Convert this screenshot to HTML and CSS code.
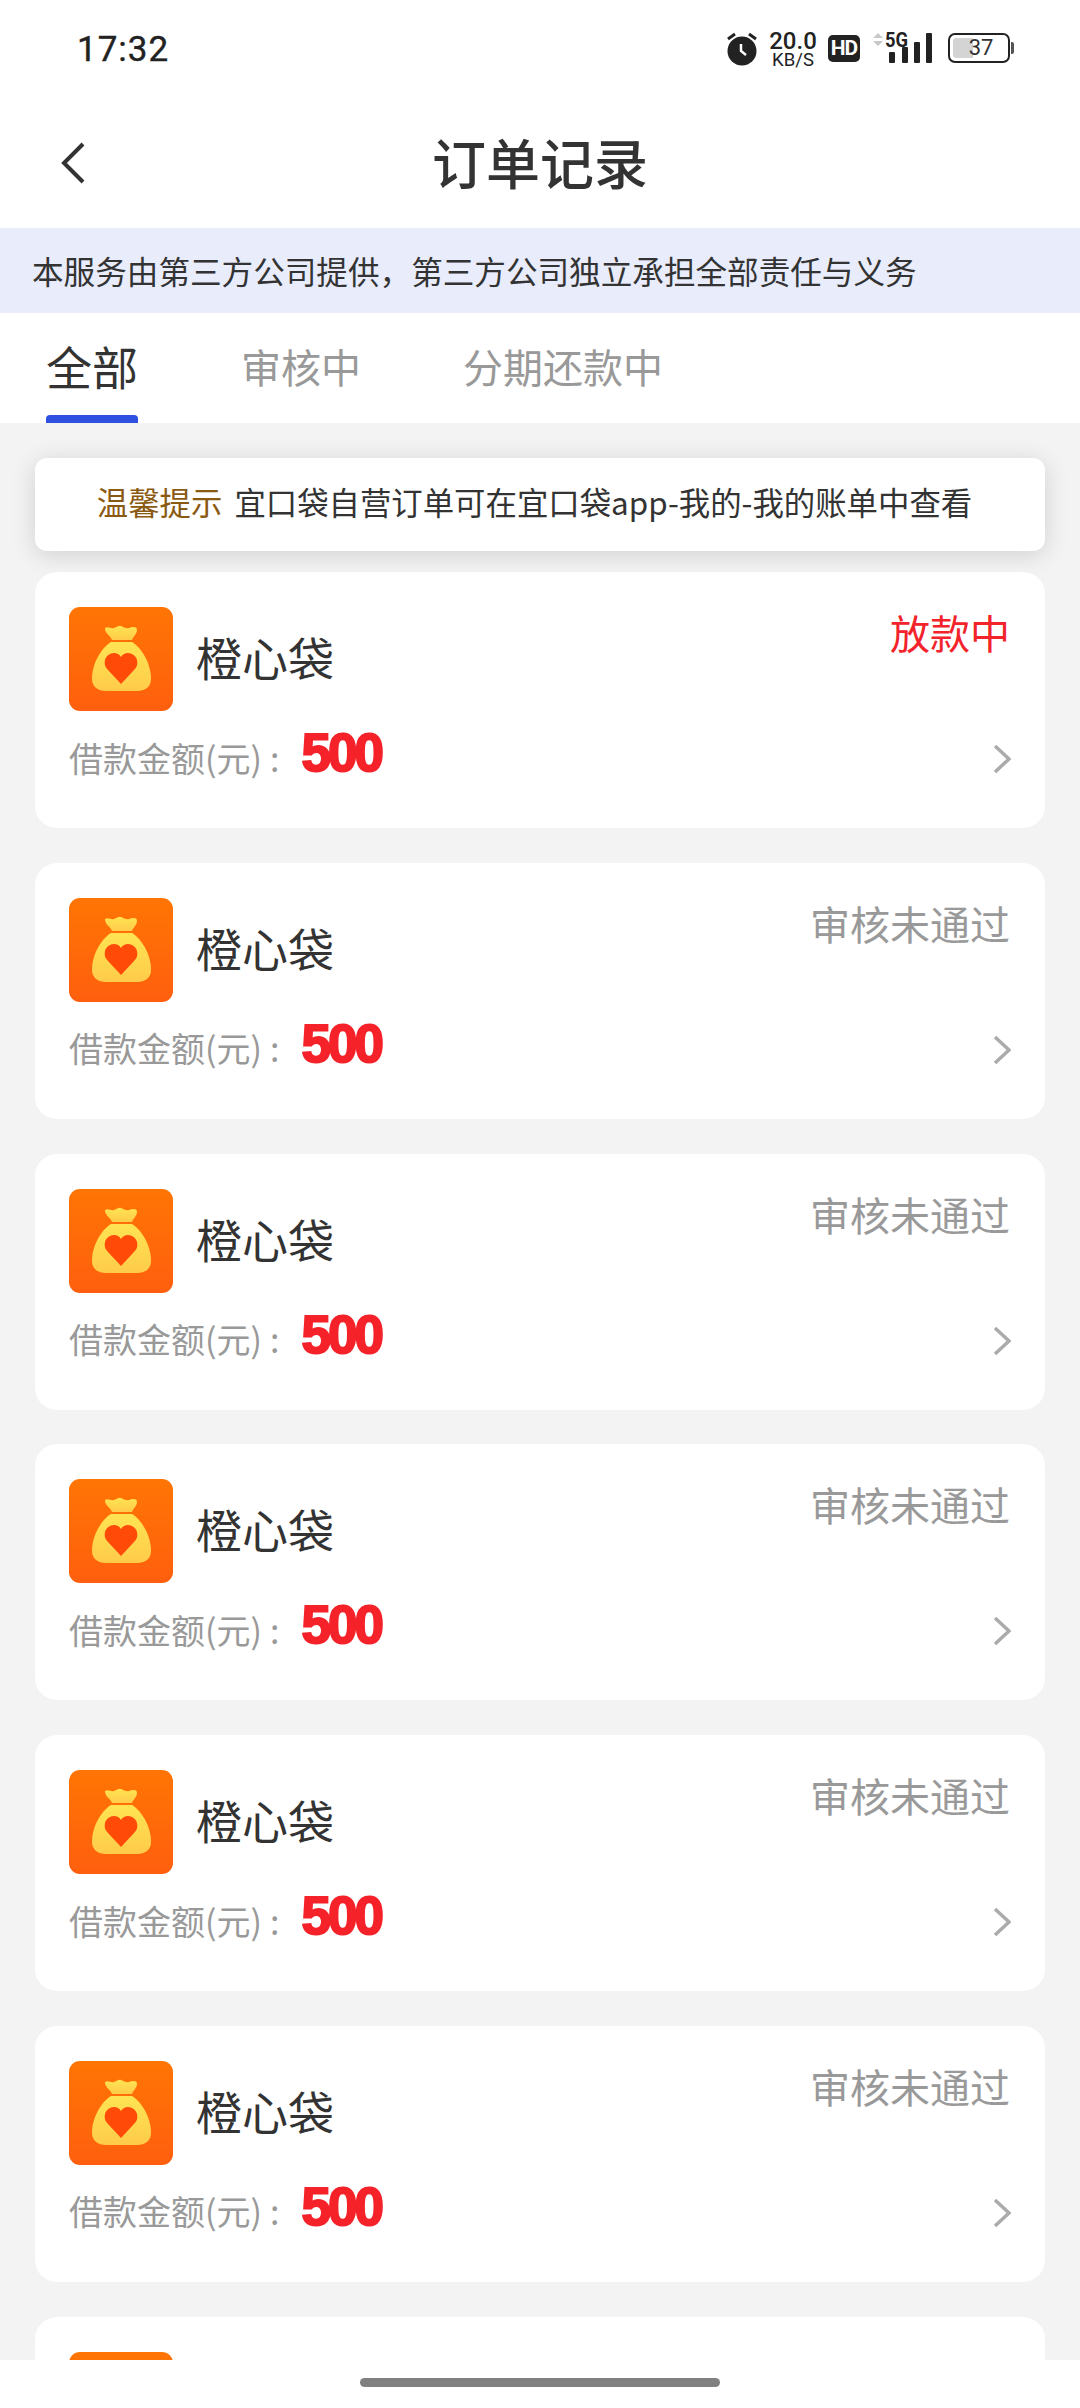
FILE: index.html
```html
<!DOCTYPE html>
<html lang="zh-CN">
<head>
  <title>订单记录</title>
  <meta charset="utf-8">
  <meta name="viewport" content="width=device-width, initial-scale=1">
  <link rel="stylesheet" href="styles.css">
</head>
<body>
  <svg class="defs" width="0" height="0" aria-hidden="true">
    <defs>
      <linearGradient id="iconBg" x1="0" y1="0" x2="0" y2="1">
        <stop offset="0" stop-color="#FF7504"/>
        <stop offset="1" stop-color="#FF5F0E"/>
      </linearGradient>
      <linearGradient id="bagFill" x1="0" y1="0" x2="0" y2="1">
        <stop offset="0" stop-color="#FFE452"/>
        <stop offset="1" stop-color="#FFCB4A"/>
      </linearGradient>
      <symbol id="bag" viewBox="0 0 104 104">
        <rect width="104" height="104" rx="11" fill="url(#iconBg)"/>
        <path d="M36 21c3-2 6 1 9 0 3-1 5-3 7-2 3 1 5 3 8 2 3-1 8-2 8 2 0 4-3 5-5 10H43c-2-5-7-6-7-12z" fill="url(#bagFill)"/>
        <path d="M42 35h21c6 3 19 18 19 37 0 8-6 12-14 12H37c-8 0-14-4-14-12 0-19 13-34 19-37z" fill="url(#bagFill)"/>
        <path d="M52 77 39 63c-3-3-4-6-3-10 1-4 5-7 9-7 3 0 5 1 7 4 2-3 4-4 7-4 4 0 8 3 9 7 1 4 0 7-3 10z" fill="#FF4A08"/>
      </symbol>
      <symbol id="chevron" viewBox="0 0 18 30">
        <path d="M2 2l14 13L2 28" fill="none" stroke="#ABABAB" stroke-width="3.5"/>
      </symbol>
    </defs>
  </svg>

  <div class="page">
    <header class="status-bar">
      <span class="time">17:32</span>
      <div class="status-icons">
        <svg class="alarm" width="30" height="35" viewBox="0 0 30 35">
          <path d="M1 8l7-5M29 8l-7-5" stroke="#222" stroke-width="3" fill="none"/>
          <circle cx="15" cy="20" r="14.5" fill="#222"/>
          <path d="M14 13v7l5 4" stroke="#fff" stroke-width="2.5" fill="none"/>
        </svg>
        <div class="speed"><span class="speed-num">20.0</span><span class="speed-unit">KB/S</span></div>
        <span class="hd">HD</span>
        <svg class="signal" width="62" height="32" viewBox="0 0 62 32">
          <path d="M1 6l5-5 5 5zM1 9l5 5 5-5z" fill="#C8C8C8"/>
          <rect x="17" y="20" width="6" height="11" rx="1" fill="#222"/>
          <rect x="30" y="15" width="6" height="16" rx="1" fill="#222"/>
          <rect x="42" y="10" width="6" height="21" rx="1" fill="#222"/>
          <rect x="54" y="1" width="6" height="30" rx="1" fill="#222"/>
          <text x="13" y="15" class="signal-text" textLength="23" lengthAdjust="spacingAndGlyphs">5G</text>
        </svg>
        <div class="battery"><span class="battery-fill"></span><span class="battery-num">37</span></div>
      </div>
    </header>

    <nav class="nav">
      <svg class="back" width="26" height="42" viewBox="0 0 26 42">
        <path d="M23 2 4 21l19 19" fill="none" stroke="#333" stroke-width="4"/>
      </svg>
      <h1 class="nav-title">订单记录</h1>
    </nav>

    <div class="service-note">本服务由第三方公司提供，第三方公司独立承担全部责任与义务</div>

    <div class="tabs">
      <a class="tab tab-active">全部</a>
      <a class="tab">审核中</a>
      <a class="tab">分期还款中</a>
    </div>

    <main class="content">
      <div class="tip"><span class="tip-label">温馨提示</span><span>宜口袋自营订单可在宜口袋app-我的-我的账单中查看</span></div>

      <section class="orders">
        <article class="order">
          <div class="order-top">
            <svg class="order-icon"><use href="#bag"/></svg>
            <span class="order-name">橙心袋</span>
            <span class="order-status status-red">放款中</span>
          </div>
          <div class="order-bottom">
            <span class="order-label">借款金额(元)<span class="order-colon">:</span></span>
            <span class="order-amount">500</span>
            <svg class="order-arrow"><use href="#chevron"/></svg>
          </div>
        </article>
        <article class="order">
          <div class="order-top">
            <svg class="order-icon"><use href="#bag"/></svg>
            <span class="order-name">橙心袋</span>
            <span class="order-status">审核未通过</span>
          </div>
          <div class="order-bottom">
            <span class="order-label">借款金额(元)<span class="order-colon">:</span></span>
            <span class="order-amount">500</span>
            <svg class="order-arrow"><use href="#chevron"/></svg>
          </div>
        </article>
        <article class="order">
          <div class="order-top">
            <svg class="order-icon"><use href="#bag"/></svg>
            <span class="order-name">橙心袋</span>
            <span class="order-status">审核未通过</span>
          </div>
          <div class="order-bottom">
            <span class="order-label">借款金额(元)<span class="order-colon">:</span></span>
            <span class="order-amount">500</span>
            <svg class="order-arrow"><use href="#chevron"/></svg>
          </div>
        </article>
        <article class="order">
          <div class="order-top">
            <svg class="order-icon"><use href="#bag"/></svg>
            <span class="order-name">橙心袋</span>
            <span class="order-status">审核未通过</span>
          </div>
          <div class="order-bottom">
            <span class="order-label">借款金额(元)<span class="order-colon">:</span></span>
            <span class="order-amount">500</span>
            <svg class="order-arrow"><use href="#chevron"/></svg>
          </div>
        </article>
        <article class="order">
          <div class="order-top">
            <svg class="order-icon"><use href="#bag"/></svg>
            <span class="order-name">橙心袋</span>
            <span class="order-status">审核未通过</span>
          </div>
          <div class="order-bottom">
            <span class="order-label">借款金额(元)<span class="order-colon">:</span></span>
            <span class="order-amount">500</span>
            <svg class="order-arrow"><use href="#chevron"/></svg>
          </div>
        </article>
        <article class="order">
          <div class="order-top">
            <svg class="order-icon"><use href="#bag"/></svg>
            <span class="order-name">橙心袋</span>
            <span class="order-status">审核未通过</span>
          </div>
          <div class="order-bottom">
            <span class="order-label">借款金额(元)<span class="order-colon">:</span></span>
            <span class="order-amount">500</span>
            <svg class="order-arrow"><use href="#chevron"/></svg>
          </div>
        </article>
        <article class="order">
          <div class="order-top">
            <svg class="order-icon"><use href="#bag"/></svg>
          </div>
        </article>
      </section>
    </main>

    <div class="home-bar"><span class="home-pill"></span></div>
  </div>
</body>
</html>
```

FILE: styles.css
```css
*, *::before, *::after {
  margin: 0;
  padding: 0;
  box-sizing: border-box;
}

html, body {
  width: 1080px;
  height: 2408px;
  overflow: hidden;
}

body {
  background-color: #F3F3F3;
  color: #333333;
  font-family: "Noto Sans CJK SC", "Noto Sans", sans-serif;
}

.defs {
  display: block;
  height: 0;
}

.page {
  position: relative;
  width: 1080px;
  height: 2408px;
  overflow: hidden;
  display: flex;
  flex-direction: column;
}

/* status bar */
.status-bar {
  height: 98px;
  flex: none;
  display: flex;
  justify-content: space-between;
  align-items: flex-start;
  padding: 26px 70px 0 77px;
  background-color: #FFFFFF;
  color: #222222;
}

.time {
  margin-top: 2px;
  font-family: "Roboto", sans-serif;
  font-size: 35px;
  font-weight: 400;
  line-height: 44px;
  letter-spacing: 1px;
  -webkit-text-stroke: 0.4px #222222;
}

.status-icons {
  display: flex;
  align-items: center;
  height: 44px;
}

.alarm {
  margin-right: 10px;
}

.speed {
  display: flex;
  flex-direction: column;
  align-items: center;
  width: 52px;
  margin-top: 3px;
  font-family: "Roboto", sans-serif;
  color: #222222;
}

.speed-num {
  font-size: 24px;
  font-weight: 500;
  line-height: 20px;
}

.speed-unit {
  font-size: 18.5px;
  line-height: 18px;
}

.hd {
  width: 32px;
  height: 27px;
  margin-left: 9px;
  border-radius: 5px;
  background-color: #222222;
  color: #FFFFFF;
  font-family: "Roboto", sans-serif;
  font-size: 21px;
  font-weight: 700;
  line-height: 27px;
  text-align: center;
  letter-spacing: -1px;
}

.signal {
  margin-left: 12px;
  overflow: visible;
}

.signal-text {
  font-family: "Roboto", sans-serif;
  font-size: 20px;
  font-weight: 700;
  fill: #222222;
}

.battery {
  position: relative;
  width: 62px;
  height: 30px;
  margin-left: 14px;
  border: 2px solid #222222;
  border-radius: 7px;
  padding-left: 4px;
  text-align: center;
  font-family: "Roboto", sans-serif;
  font-size: 22px;
  line-height: 26px;
  color: #333333;
}

.battery::after {
  content: "";
  position: absolute;
  right: -6px;
  top: 7px;
  width: 3px;
  height: 12px;
  border-radius: 0 2px 2px 0;
  background-color: #555555;
}

.battery-fill {
  position: absolute;
  left: 3px;
  top: 3px;
  bottom: 3px;
  width: 20px;
  border-radius: 3px 0 0 3px;
  background-color: #D4D4D4;
}

.battery-num {
  position: relative;
}

/* nav */
.nav {
  position: relative;
  height: 130px;
  flex: none;
  display: flex;
  align-items: center;
  justify-content: center;
  background-color: #FFFFFF;
}

.back {
  position: absolute;
  left: 60px;
  top: 44px;
}

.nav-title {
  padding-bottom: 4px;
  font-size: 54px;
  font-weight: 500;
  color: #333333;
}

.service-note {
  height: 85px;
  flex: none;
  display: flex;
  align-items: center;
  padding: 0 0 2px 32px;
  background-color: #E8ECFB;
  font-size: 31.6px;
  color: #333333;
}

/* tabs */
.tabs {
  height: 110px;
  flex: none;
  display: flex;
  padding-left: 46px;
  background-color: #FFFFFF;
}

.tab {
  height: 110px;
  margin-right: 102px;
  font-size: 40px;
  color: #999999;
  line-height: 106px;
}

.tab-active {
  position: relative;
  margin-right: 103px;
  font-size: 46px;
  color: #333333;
  line-height: 104px;
}

.tab-active::after {
  content: "";
  position: absolute;
  left: 0;
  right: 0;
  bottom: 0;
  height: 8px;
  border-radius: 4px 4px 0 0;
  background-color: #2F4FE0;
}

/* content */
.content {
  flex: 1;
  padding: 35px 35px 0;
}

.tip {
  height: 93px;
  display: flex;
  align-items: center;
  justify-content: center;
  gap: 12px;
  padding: 0 11px 7px 0;
  border-radius: 12px;
  background-color: #FFFFFF;
  box-shadow: 0 4px 24px rgba(0, 0, 0, 0.14);
  font-size: 31.4px;
  color: #333333;
}

.tip-label {
  color: #8A5A12;
}

.orders {
  display: flex;
  flex-direction: column;
  gap: 34.8px;
  margin-top: 21px;
}

.order {
  height: 256px;
  flex: none;
  padding: 35px 34px 0;
  border-radius: 22px;
  background-color: #FFFFFF;
}

.order-top {
  display: flex;
  align-items: center;
  height: 104px;
}

.order-icon {
  width: 104px;
  height: 104px;
  flex: none;
}

.order-name {
  margin-left: 23px;
  padding-bottom: 6px;
  font-size: 46px;
  font-weight: 400;
  color: #333333;
}

.order-status {
  align-self: flex-start;
  margin: -3px 1px 0 auto;
  font-size: 40px;
  line-height: 56px;
  color: #999999;
}

.status-red {
  color: #F2232A;
}

.order-bottom {
  display: flex;
  align-items: center;
  height: 60px;
  margin-top: 16px;
}

.order-label {
  font-size: 34px;
  color: #999999;
}

.order-colon {
  margin-left: 8px;
}

.order-amount {
  margin-left: 22px;
  padding-bottom: 8px;
  font-family: "Liberation Sans", sans-serif;
  font-size: 53px;
  font-weight: 700;
  line-height: 60px;
  letter-spacing: -3px;
  color: #F5222A;
  -webkit-text-stroke: 2px #F5222A;
}

.order-arrow {
  width: 18px;
  height: 30px;
  margin: 4px 0 0 auto;
}

/* gesture bar */
.home-bar {
  position: absolute;
  left: 0;
  right: 0;
  bottom: 0;
  height: 48px;
  display: flex;
  justify-content: center;
  padding-top: 18px;
  background-color: #FFFFFF;
}

.home-pill {
  width: 360px;
  height: 9px;
  border-radius: 5px;
  background-color: #808080;
}
```
